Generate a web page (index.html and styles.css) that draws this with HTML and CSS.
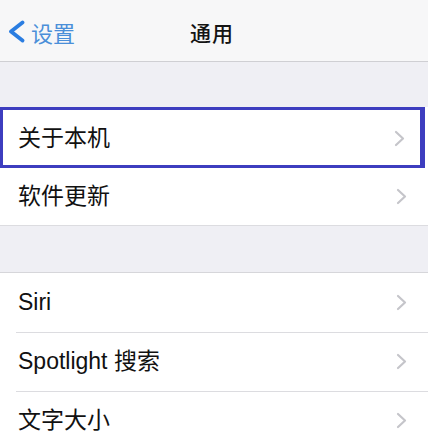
FILE: index.html
```html
<!DOCTYPE html>
<html lang="zh-CN">
<head>
<meta charset="utf-8">
<link rel="stylesheet" href="styles.css">
</head>
<body>
<div class="screen">
  <header class="nav">
    <a class="back">
      <svg class="back-icon" width="19" height="23" viewBox="0 0 19 23"><polyline points="15.5,2.5 4,11.5 15.5,20.5" fill="none" stroke="currentColor" stroke-width="3.8" stroke-linecap="round" stroke-linejoin="round"/></svg>
      <span>设置</span>
    </a>
    <h1 class="title">通用</h1>
    <span></span>
  </header>
  <div class="spacer first"></div>
  <ul class="group">
    <li class="row selected"><span class="label">关于本机</span><svg class="chev" width="13" height="17" viewBox="0 0 13 17"><polyline points="3,2 10,8.5 3,15" fill="none" stroke="currentColor" stroke-width="2.2" stroke-linecap="round" stroke-linejoin="round"/></svg></li>
    <li class="row"><span class="label">软件更新</span><svg class="chev" width="13" height="17" viewBox="0 0 13 17"><polyline points="3,2 10,8.5 3,15" fill="none" stroke="currentColor" stroke-width="2.2" stroke-linecap="round" stroke-linejoin="round"/></svg></li>
  </ul>
  <div class="spacer second"></div>
  <ul class="group">
    <li class="row"><span class="label">Siri</span><svg class="chev" width="13" height="17" viewBox="0 0 13 17"><polyline points="3,2 10,8.5 3,15" fill="none" stroke="currentColor" stroke-width="2.2" stroke-linecap="round" stroke-linejoin="round"/></svg></li>
    <li class="row"><span class="label">Spotlight 搜索</span><svg class="chev" width="13" height="17" viewBox="0 0 13 17"><polyline points="3,2 10,8.5 3,15" fill="none" stroke="currentColor" stroke-width="2.2" stroke-linecap="round" stroke-linejoin="round"/></svg></li>
    <li class="row"><span class="label">文字大小</span><svg class="chev" width="13" height="17" viewBox="0 0 13 17"><polyline points="3,2 10,8.5 3,15" fill="none" stroke="currentColor" stroke-width="2.2" stroke-linecap="round" stroke-linejoin="round"/></svg></li>
  </ul>
</div>
</body>
</html>
```
FILE: styles.css
```css
* { box-sizing: border-box; }
html, body {
  margin: 0;
  padding: 0;
  background: #efeff4;
}
body {
  font-family: "Liberation Sans", "Noto Sans CJK SC", sans-serif;
  color: #111;
}
.screen {
  width: 428px;
  height: 440px;
  overflow: hidden;
  display: flex;
  flex-direction: column;
}
.nav {
  height: 62px;
  flex: none;
  background: #f7f7f8;
  border-bottom: 1px solid #cfcfd3;
  display: grid;
  grid-template-columns: 1fr auto 1fr;
  align-items: center;
  padding-right: 4px;
}
.back {
  display: flex;
  align-items: center;
  gap: 5px;
  padding-left: 7px;
  color: #2a7de1;
  font-size: 22px;
  margin-top: 2px;
}
.back span { color: #4b8fd9; }
.back-icon { display: block; }
.title {
  margin: 0;
  font-size: 21px;
  font-weight: 500;
  letter-spacing: 1px;
  color: #141414;
  margin-top: 2px;
}
.spacer { flex: none; background: #efeff4; }
.spacer.first { height: 45px; }
.spacer.second {
  height: 48px;
  border-top: 1px solid #dcdce0;
  border-bottom: 1px solid #d6d6da;
}
.group {
  list-style: none;
  margin: 0;
  padding: 0;
  background: #fff;
}
.row {
  position: relative;
  height: 59px;
  display: flex;
  align-items: center;
  justify-content: space-between;
  padding: 0 20px 0 18px;
  font-size: 23px;
  background: #fff;
}
.row + .row::before {
  content: "";
  position: absolute;
  left: 16px;
  right: 0;
  top: 0;
  border-top: 1px solid #dcdce0;
}
.row.selected {
  height: 61px;
  margin-right: 3px;
  border: 3px solid #3d3dbf;
  border-right-width: 5px;
  padding: 2px 14px 0 15px;
}
.row.selected + .row { height: 57px; }
.row.selected + .row::before { display: none; }
.label { line-height: 1; }
.chev { color: #c5c5ca; display: block; }
```
